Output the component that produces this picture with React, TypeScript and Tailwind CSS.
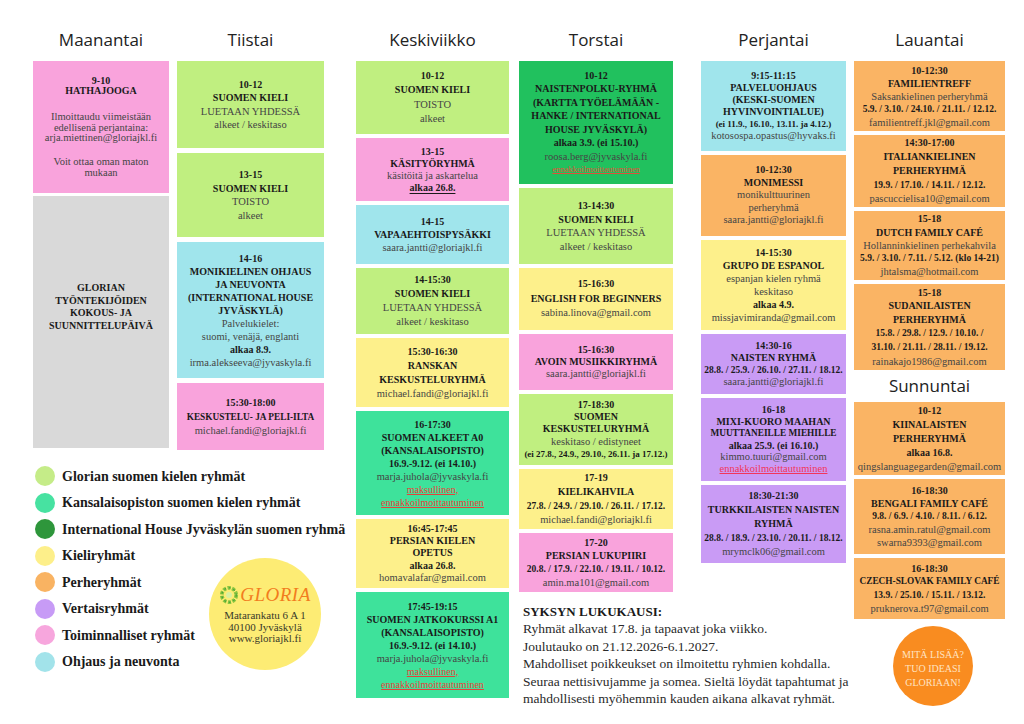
import React from 'react';

type K = 'h' | 'hs' | 'n' | 'b' | 'u' | 'd' | 'ds' | 'r' | 'rs' | 'rp' | 'g';
type Line = [K, string];

const lineCls: Record<K, string> = {
  h: "text-[10px] font-bold text-[#1a1a1a]",
  hs: "text-[9.3px] font-bold text-[#1a1a1a]",
  n: "text-[10.5px] text-[#454545]",
  b: "text-[10px] font-bold text-[#1a1a1a]",
  u: "text-[10px] font-bold text-[#1a1a1a] underline underline-offset-2",
  d: "text-[9.5px] font-bold text-[#1a1a1a]",
  ds: "text-[9px] font-bold text-[#1a1a1a]",
  r: "text-[10px] text-[#e5433a] underline underline-offset-1",
  rs: "text-[8.5px] text-[#e0503a] underline underline-offset-1",
  rp: "text-[10.5px] text-[#f2365a] underline underline-offset-1",
  g: "",
};

const G = 'bg-[#c0ef80]';
const P = 'bg-[#f9a3dc]';
const C = 'bg-[#a0e5ec]';
const D = 'bg-[#21c15e]';
const TE = 'bg-[#3ee29b]';
const Y = 'bg-[#fdf08b]';
const O = 'bg-[#fab464]';
const V = 'bg-[#c99bf5]';
const GR = 'bg-[#d9d9d9]';

function Box({ bg, h, lh, lines, extra = '' }: { bg: string; h: string; lh: string; lines: Line[]; extra?: string }) {
  return (
    <div className={`flex flex-col items-center justify-center text-center ${bg} ${h} ${lh} ${extra}`}>
      {lines.map((l, i) =>
        l[0] === 'g' ? (
          <div key={i} className={l[1]} />
        ) : (
          <div key={i} className={`whitespace-nowrap ${lineCls[l[0]]}`}>
            {l[1]}
          </div>
        )
      )}
    </div>
  );
}

function DayHead({ name }: { name: string }) {
  return (
    <div className="h-[24px] leading-[24px] text-center text-[17px] text-[#222] font-['Open_Sans',sans-serif]">
      {name}
    </div>
  );
}

const legend: [string, string][] = [
  ['bg-[#c5ec88]', 'Glorian suomen kielen ryhmät'],
  ['bg-[#47e2a1]', 'Kansalaisopiston suomen kielen ryhmät'],
  ['bg-[#2e963b]', 'International House Jyväskylän suomen ryhmä'],
  ['bg-[#fdef8a]', 'Kieliryhmät'],
  ['bg-[#f9b362]', 'Perheryhmät'],
  ['bg-[#c79bf6]', 'Vertaisryhmät'],
  ['bg-[#f7a6dd]', 'Toiminnalliset ryhmät'],
  ['bg-[#a2e3ea]', 'Ohjaus ja neuvonta'],
];

function LegendRow({ c, t }: { c: string; t: string }) {
  return (
    <div className="flex items-center h-[26.5px]">
      <span className={`w-5 h-5 rounded-full ml-[2px] shrink-0 ${c}`} />
      <span className="ml-[7px] whitespace-nowrap text-[14px] font-bold text-[#1a1a1a]">{t}</span>
    </div>
  );
}

function GloriaIcon() {
  return (
    <svg width="20" height="20" viewBox="0 0 20 20">
      <circle cx="10" cy="10" r="7.2" fill="none" stroke="#8cc63f" strokeWidth="3.8" strokeDasharray="3.2 1.4" />
      <circle cx="10" cy="10" r="7.2" fill="none" stroke="#3f9e3a" strokeWidth="1.1" strokeDasharray="1.8 3" />
      <circle cx="10" cy="10" r="3" fill="#d9f0a0" />
    </svg>
  );
}

export default function App() {
  return (
    <div className="w-[1024px] h-[724px] overflow-hidden bg-white font-['Liberation_Serif',serif] pt-[28px]">
      <div className="flex items-start">
        {/* Group 1: Maanantai + Tiistai + legend */}
        <div className="ml-[33px] w-[291px] shrink-0 flex flex-col">
          <div className="flex items-start">
            <div className="w-[136px] shrink-0">
              <DayHead name="Maanantai" />
              <div className="mt-[9px] flex flex-col gap-[3px]">
                <Box bg={P} h="h-[132px]" lh="leading-[10.7px]" lines={[
                  ['h', '9-10'], ['h', 'HATHAJOOGA'], ['g', 'h-[15px]'],
                  ['n', 'Ilmoittaudu viimeistään'], ['n', 'edellisenä perjantaina:'], ['n', 'arja.miettinen@gloriajkl.fi'],
                  ['g', 'h-[13px]'], ['n', 'Voit ottaa oman maton'], ['n', 'mukaan'],
                ]} />
                <Box bg={GR} h="h-[252px]" lh="leading-[12.5px]" extra="pb-[30px]" lines={[
                  ['h', 'GLORIAN'], ['h', 'TYÖNTEKIJÖIDEN'], ['h', 'KOKOUS- JA'], ['h', 'SUUNNITTELUPÄIVÄ'],
                ]} />
              </div>
            </div>
            <div className="ml-[8px] w-[147px] shrink-0">
              <DayHead name="Tiistai" />
              <div className="mt-[9px] flex flex-col gap-[5px]">
                <Box bg={G} h="h-[87px]" lh="leading-[13.5px]" lines={[
                  ['h', '10-12'], ['h', 'SUOMEN KIELI'], ['n', 'LUETAAN YHDESSÄ'], ['n', 'alkeet / keskitaso'],
                ]} />
                <Box bg={G} h="h-[84px]" lh="leading-[13.5px]" lines={[
                  ['h', '13-15'], ['h', 'SUOMEN KIELI'], ['n', 'TOISTO'], ['n', 'alkeet'],
                ]} />
                <Box bg={C} h="h-[136px]" lh="leading-[13px]" lines={[
                  ['h', '14-16'], ['h', 'MONIKIELINEN OHJAUS'], ['h', 'JA NEUVONTA'], ['h', '(INTERNATIONAL HOUSE'], ['h', 'JYVÄSKYLÄ)'],
                  ['n', 'Palvelukielet:'], ['n', 'suomi, venäjä, englanti'], ['b', 'alkaa 8.9.'], ['n', 'irma.alekseeva@jyvaskyla.fi'],
                ]} />
                <Box bg={P} h="h-[67px]" lh="leading-[14px]" lines={[
                  ['h', '15:30-18:00'], ['hs', 'KESKUSTELU- JA PELI-ILTA'], ['n', 'michael.fandi@gloriajkl.fi'],
                ]} />
              </div>
            </div>
          </div>
          {/* Legend */}
          <div className="mt-[13px] flex flex-col">
            {legend.slice(0, 3).map(([c, t]) => (
              <LegendRow key={t} c={c} t={t} />
            ))}
            <div className="flex items-start">
              <div className="w-[176px] shrink-0 flex flex-col">
                {legend.slice(3).map(([c, t]) => (
                  <LegendRow key={t} c={c} t={t} />
                ))}
              </div>
              <div className="mt-[15px] w-[112px] h-[112px] shrink-0 rounded-full bg-[#fdec74] flex flex-col items-center justify-center pt-[2px]">
                <div className="flex items-center gap-[1px]">
                  <GloriaIcon />
                  <span className="italic text-[19px] leading-[22px] text-[#f27d1e] tracking-[0.5px]">GLORIA</span>
                </div>
                <div className="mt-[4px] text-[11px] leading-[11.5px] text-[#3a3a2a] text-center">
                  <div>Matarankatu 6 A 1</div>
                  <div>40100 Jyväskylä</div>
                  <div>www.gloriajkl.fi</div>
                </div>
              </div>
            </div>
          </div>
        </div>

        {/* Keskiviikko */}
        <div className="ml-[32px] w-[153px] shrink-0">
          <DayHead name="Keskiviikko" />
          <div className="mt-[9px] flex flex-col gap-[4px]">
            <Box bg={G} h="h-[73px]" lh="leading-[14.5px]" lines={[
              ['h', '10-12'], ['h', 'SUOMEN KIELI'], ['n', 'TOISTO'], ['n', 'alkeet'],
            ]} />
            <Box bg={P} h="h-[63px]" lh="leading-[12px]" lines={[
              ['h', '13-15'], ['h', 'KÄSITYÖRYHMÄ'], ['n', 'käsitöitä ja askartelua'], ['u', 'alkaa 26.8.'],
            ]} />
            <Box bg={C} h="h-[59px]" lh="leading-[13.3px]" lines={[
              ['h', '14-15'], ['h', 'VAPAAEHTOISPYSÄKKI'], ['n', 'saara.jantti@gloriajkl.fi'],
            ]} />
            <Box bg={G} h="h-[66px]" lh="leading-[14px]" lines={[
              ['h', '14-15:30'], ['h', 'SUOMEN KIELI'], ['n', 'LUETAAN YHDESSÄ'], ['n', 'alkeet / keskitaso'],
            ]} />
            <Box bg={Y} h="h-[69px]" lh="leading-[14px]" lines={[
              ['h', '15:30-16:30'], ['h', 'RANSKAN'], ['h', 'KESKUSTELURYHMÄ'], ['n', 'michael.fandi@gloriajkl.fi'],
            ]} />
            <Box bg={TE} h="h-[104px]" lh="leading-[13px]" lines={[
              ['h', '16-17:30'], ['h', 'SUOMEN ALKEET A0'], ['h', '(KANSALAISOPISTO)'], ['b', '16.9.-9.12. (ei 14.10.)'],
              ['n', 'marja.juhola@jyvaskyla.fi'], ['r', 'maksullinen,'], ['r', 'ennakkoilmoittautuminen'],
            ]} />
            <Box bg={Y} h="h-[69px]" lh="leading-[12.3px]" lines={[
              ['h', '16:45-17:45'], ['h', 'PERSIAN KIELEN'], ['h', 'OPETUS'], ['b', 'alkaa 26.8.'], ['n', 'homavalafar@gmail.com'],
            ]} />
            <Box bg={TE} h="h-[106px]" lh="leading-[13px]" lines={[
              ['h', '17:45-19:15'], ['h', 'SUOMEN JATKOKURSSI A1'], ['h', '(KANSALAISOPISTO)'], ['b', '16.9.-9.12. (ei 14.10.)'],
              ['n', 'marja.juhola@jyvaskyla.fi'], ['r', 'maksullinen,'], ['r', 'ennakkoilmoittautuminen'],
            ]} />
          </div>
        </div>

        {/* Group 2: Torstai + Perjantai + info */}
        <div className="ml-[10px] w-[327px] shrink-0 flex flex-col">
          <div className="flex items-start">
            <div className="w-[154px] shrink-0">
              <DayHead name="Torstai" />
              <div className="mt-[9px] flex flex-col gap-[4px]">
                <Box bg={D} h="h-[123px]" lh="leading-[13.5px]" lines={[
                  ['h', '10-12'], ['h', 'NAISTENPOLKU-RYHMÄ'], ['h', '(KARTTA TYÖELÄMÄÄN -'], ['h', 'HANKE / INTERNATIONAL'],
                  ['h', 'HOUSE JYVÄSKYLÄ)'], ['b', 'alkaa 3.9. (ei 15.10.)'], ['n', 'roosa.berg@jyvaskyla.fi'], ['rs', 'ennakkoilmoittautuminen'],
                ]} />
                <Box bg={G} h="h-[76px]" lh="leading-[13.5px]" lines={[
                  ['h', '13-14:30'], ['h', 'SUOMEN KIELI'], ['n', 'LUETAAN YHDESSÄ'], ['n', 'alkeet / keskitaso'],
                ]} />
                <Box bg={Y} h="h-[62px]" lh="leading-[14.5px]" lines={[
                  ['h', '15-16:30'], ['h', 'ENGLISH FOR BEGINNERS'], ['n', 'sabina.linova@gmail.com'],
                ]} />
                <Box bg={P} h="h-[56px]" lh="leading-[11.8px]" lines={[
                  ['h', '15-16:30'], ['h', 'AVOIN MUSIIKKIRYHMÄ'], ['n', 'saara.jantti@gloriajkl.fi'],
                ]} />
                <Box bg={G} h="h-[71px]" lh="leading-[12.3px]" lines={[
                  ['h', '17-18:30'], ['h', 'SUOMEN'], ['h', 'KESKUSTELURYHMÄ'], ['n', 'keskitaso / edistyneet'],
                  ['ds', '(ei 27.8., 24.9., 29.10., 26.11. ja 17.12.)'],
                ]} />
                <Box bg={Y} h="h-[60px]" lh="leading-[14px]" lines={[
                  ['h', '17-19'], ['h', 'KIELIKAHVILA'], ['d', '27.8. / 24.9. / 29.10. / 26.11. / 17.12.'], ['n', 'michael.fandi@gloriajkl.fi'],
                ]} />
                <Box bg={P} h="h-[59px]" lh="leading-[13.3px]" lines={[
                  ['h', '17-20'], ['h', 'PERSIAN LUKUPIIRI'], ['d', '20.8. / 17.9. / 22.10. / 19.11. / 10.12.'], ['n', 'amin.ma101@gmail.com'],
                ]} />
              </div>
            </div>
            <div className="ml-[28px] w-[145px] shrink-0">
              <DayHead name="Perjantai" />
              <div className="mt-[9px] flex flex-col gap-[4px]">
                <Box bg={C} h="h-[90px]" lh="leading-[12px]" lines={[
                  ['h', '9:15-11:15'], ['h', 'PALVELUOHJAUS'], ['h', '(KESKI-SUOMEN'], ['h', 'HYVINVOINTIALUE)'],
                  ['ds', '(ei 11.9., 16.10., 13.11. ja 4.12.)'], ['n', 'kotosospa.opastus@hyvaks.fi'],
                ]} />
                <Box bg={O} h="h-[81px]" lh="leading-[12.5px]" lines={[
                  ['h', '10-12:30'], ['h', 'MONIMESSI'], ['n', 'monikulttuurinen'], ['n', 'perheryhmä'], ['n', 'saara.jantti@gloriajkl.fi'],
                ]} />
                <Box bg={Y} h="h-[90px]" lh="leading-[13px]" lines={[
                  ['h', '14-15:30'], ['h', 'GRUPO DE ESPANOL'], ['n', 'espanjan kielen ryhmä'], ['n', 'keskitaso'],
                  ['b', 'alkaa 4.9.'], ['n', 'missjavimiranda@gmail.com'],
                ]} />
                <Box bg={V} h="h-[60px]" lh="leading-[12px]" lines={[
                  ['h', '14:30-16'], ['h', 'NAISTEN RYHMÄ'], ['d', '28.8. / 25.9. / 26.10. / 27.11. / 18.12.'], ['n', 'saara.jantti@gloriajkl.fi'],
                ]} />
                <Box bg={V} h="h-[83px]" lh="leading-[11.8px]" lines={[
                  ['h', '16-18'], ['h', 'MIXI-KUORO MAAHAN'], ['hs', 'MUUTTANEILLE MIEHILLE'], ['b', 'alkaa 25.9. (ei 16.10.)'],
                  ['n', 'kimmo.tuuri@gmail.com'], ['rp', 'ennakkoilmoittautuminen'],
                ]} />
                <Box bg={V} h="h-[78px]" lh="leading-[14px]" lines={[
                  ['h', '18:30-21:30'], ['h', 'TURKKILAISTEN NAISTEN'], ['h', 'RYHMÄ'],
                  ['d', '28.8. / 18.9. / 23.10. / 20.11. / 18.12.'], ['n', 'mrymclk06@gmail.com'],
                ]} />
              </div>
            </div>
          </div>
          <div className="mt-[11px] ml-[4px] text-[13.5px] leading-[17.4px] text-[#2a2a2a]">
            <div className="font-bold text-[13px] text-[#1a1a1a]">SYKSYN LUKUKAUSI:</div>
            <div className="whitespace-nowrap">Ryhmät alkavat 17.8. ja tapaavat joka viikko.</div>
            <div className="whitespace-nowrap">Joulutauko on 21.12.2026-6.1.2027.</div>
            <div className="whitespace-nowrap">Mahdolliset poikkeukset on ilmoitettu ryhmien kohdalla.</div>
            <div className="whitespace-nowrap">Seuraa nettisivujamme ja somea. Sieltä löydät tapahtumat ja</div>
            <div className="whitespace-nowrap">mahdollisesti myöhemmin kauden aikana alkavat ryhmät.</div>
          </div>
        </div>

        {/* Lauantai + Sunnuntai */}
        <div className="ml-[8px] w-[151px] shrink-0">
          <DayHead name="Lauantai" />
          <div className="mt-[9px] flex flex-col gap-[4px]">
            <Box bg={O} h="h-[70px]" lh="leading-[13px]" lines={[
              ['h', '10-12:30'], ['h', 'FAMILIENTREFF'], ['n', 'Saksankielinen perheryhmä'],
              ['d', '5.9. / 3.10. / 24.10. / 21.11. / 12.12.'], ['n', 'familientreff.jkl@gmail.com'],
            ]} />
            <Box bg={O} h="h-[72px]" lh="leading-[14px]" lines={[
              ['h', '14:30-17:00'], ['h', 'ITALIANKIELINEN'], ['h', 'PERHERYHMÄ'],
              ['d', '19.9. / 17.10. / 14.11. / 12.12.'], ['n', 'pascuccielisa10@gmail.com'],
            ]} />
            <Box bg={O} h="h-[69px]" lh="leading-[13.3px]" lines={[
              ['h', '15-18'], ['h', 'DUTCH FAMILY CAFÉ'], ['n', 'Hollanninkielinen perhekahvila'],
              ['d', '5.9. / 3.10. / 7.11. / 5.12. (klo 14-21)'], ['n', 'jhtalsma@hotmail.com'],
            ]} />
            <Box bg={O} h="h-[86px]" lh="leading-[13.8px]" lines={[
              ['h', '15-18'], ['h', 'SUDANILAISTEN'], ['h', 'PERHERYHMÄ'],
              ['d', '15.8. / 29.8. / 12.9. / 10.10. /'], ['d', '31.10. / 21.11. / 28.11. / 19.12.'], ['n', 'rainakajo1986@gmail.com'],
            ]} />
            <DayHead name="Sunnuntai" />
            <Box bg={O} h="h-[73px]" lh="leading-[14px]" lines={[
              ['h', '10-12'], ['h', 'KIINALAISTEN'], ['h', 'PERHERYHMÄ'], ['b', 'alkaa 16.8.'], ['n', 'qingslanguagegarden@gmail.com'],
            ]} />
            <Box bg={O} h="h-[75px]" lh="leading-[13px]" lines={[
              ['h', '16-18:30'], ['h', 'BENGALI FAMILY CAFÉ'], ['d', '9.8. / 6.9. / 4.10. / 8.11. / 6.12.'],
              ['n', 'rasna.amin.ratul@gmail.com'], ['n', 'swarna9393@gmail.com'],
            ]} />
            <Box bg={O} h="h-[61px]" lh="leading-[13.5px]" lines={[
              ['h', '16-18:30'], ['hs', 'CZECH-SLOVAK FAMILY CAFÉ'], ['d', '13.9. / 25.10. / 15.11. / 13.12.'], ['n', 'pruknerova.t97@gmail.com'],
            ]} />
            <div className="mt-[3px] ml-[39px] w-[80px] h-[80px] rounded-full bg-[#f98c20] flex flex-col items-center justify-center pt-[6px] text-[10px] leading-[14px] text-[#ffe3c2] text-center">
              <div className="whitespace-nowrap">MITÄ LISÄÄ?</div>
              <div className="whitespace-nowrap">TUO IDEASI</div>
              <div className="whitespace-nowrap">GLORIAAN!</div>
            </div>
          </div>
        </div>
      </div>
    </div>
  );
}
